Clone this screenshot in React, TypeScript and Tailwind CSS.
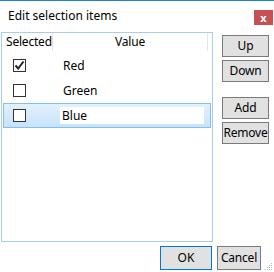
import React from "react";

const FONT = { fontFamily: '"Segoe UI", "Noto Sans", sans-serif' };

function Check({ on }: { on?: boolean }) {
  return (
    <div className="w-[13px] h-[13px] border border-[#333] bg-white flex items-center justify-center">
      {on && (
        <svg width="11" height="11" viewBox="0 0 11 11">
          <path d="M1.5 5.5 L4.2 8.5 L9.5 1.5" fill="none" stroke="#222" strokeWidth="2" />
        </svg>
      )}
    </div>
  );
}

function SideButton({ label }: { label: string }) {
  return (
    <button className="w-[47px] h-[22px] bg-[#e1e1e1] border border-[#7a7a7a] text-[12px] text-black leading-none flex items-center justify-center tracking-[-0.2px]">
      {label}
    </button>
  );
}

export default function App() {
  const rows = [
    { value: "Red", on: true },
    { value: "Green", on: false },
    { value: "Blue", on: false, selected: true },
  ];

  return (
    <div
      className="w-[274px] h-[272px] bg-white border-t border-[#1883d7] flex flex-col relative overflow-hidden"
      style={FONT}
    >
      {/* title bar */}
      <div className="h-[31px] flex items-center justify-between pl-2">
        <span className="text-[12px] text-black pb-[2px]">Edit selection items</span>
        <div className="w-[19px] h-[15px] bg-[#c75050] mt-[2px] mr-[1px] flex items-center justify-center text-white text-[11px] font-bold leading-none">
          x
        </div>
      </div>

      {/* body */}
      <div className="flex pl-[1px]">
        <div className="w-[212px] h-[210px] border border-[#a9cfe8] flex flex-col">
          <div className="h-[18px] flex text-[12px] text-black items-center tracking-[-0.2px]">
            <div className="w-[51px] h-full flex items-center pl-[4px] border-r border-[#e5e5e5]">Selected</div>
            <div className="w-[155px] h-full flex items-center justify-center border-r border-[#e5e5e5]">Value</div>
          </div>
          <div className="flex flex-col pt-[2px]">
            {rows.map((r) =>
              r.selected ? (
                <div
                  key={r.value}
                  className="h-[25px] mx-[1px] flex items-center border border-[#84bfee] bg-gradient-to-b from-[#e3f1fd] to-[#c7e3fb]"
                >
                  <div className="w-[56px] pl-[9px]">
                    <Check on={r.on} />
                  </div>
                  <div className="w-[144px] h-[17px] bg-white flex items-center pl-[2px] text-[12px] text-black">
                    {r.value}
                  </div>
                </div>
              ) : (
                <div key={r.value} className="h-[25px] mx-[1px] flex items-center border border-transparent">
                  <div className="w-[56px] pl-[9px]">
                    <Check on={r.on} />
                  </div>
                  <div className="pl-[3px] text-[12px] text-black">{r.value}</div>
                </div>
              )
            )}
          </div>
        </div>

        <div className="ml-[9px] pt-[3px] flex flex-col gap-[3px]">
          <SideButton label="Up" />
          <SideButton label="Down" />
          <div className="h-[9px]" />
          <SideButton label="Add" />
          <SideButton label="Remove" />
        </div>
      </div>

      {/* footer */}
      <div className="flex justify-end gap-[5px] pr-[13px] mt-[4px]">
        <button className="w-[52px] h-[24px] bg-[#e1e1e1] border border-[#0078d7] text-[12px] text-black">OK</button>
        <button className="w-[44px] h-[24px] bg-[#e1e1e1] border border-[#7a7a7a] text-[12px] text-black tracking-[-0.2px]">Cancel</button>
      </div>

      {/* resize grip */}
      <svg className="absolute right-[1px] bottom-[1px]" width="10" height="10" viewBox="0 0 10 10">
        {[
          [8, 2],
          [6, 4],
          [8, 4],
          [4, 6],
          [6, 6],
          [8, 6],
          [2, 8],
          [4, 8],
          [6, 8],
          [8, 8],
        ].map(([x, y], i) => (
          <rect key={i} x={x} y={y} width="1" height="1" fill="#b8b8b8" />
        ))}
      </svg>
    </div>
  );
}
